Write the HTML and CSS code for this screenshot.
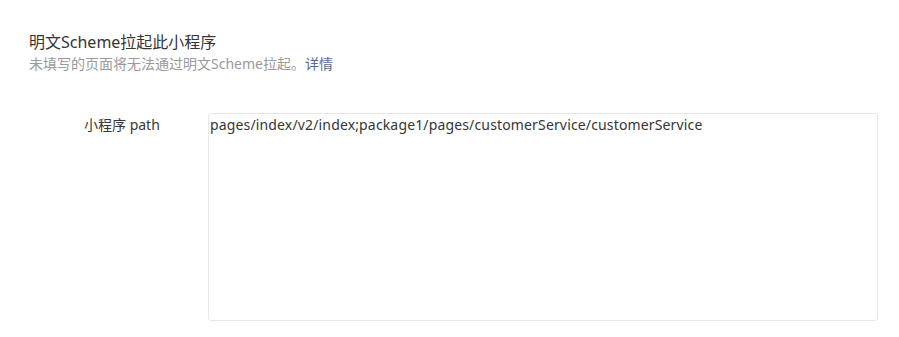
FILE: index.html
```html
<!DOCTYPE html>
<html lang="zh-CN">
<head>
    <meta charset="UTF-8">
    <title>明文Scheme拉起此小程序</title>
    <link rel="stylesheet" href="styles.css">
</head>
<body>
    <div class="section">
        <div class="section-head">
            <h3 class="section-title">明文Scheme拉起此小程序</h3>
            <p class="section-desc">未填写的页面将无法通过明文Scheme拉起。<a href="#" class="link">详情</a></p>
        </div>
        <div class="form-row">
            <label class="form-label" for="path">小程序 path</label>
            <div class="form-control">
                <textarea id="path" class="textarea">pages/index/v2/index;package1/pages/customerService/customerService</textarea>
            </div>
        </div>
    </div>
</body>
</html>
```

FILE: styles.css
```css
body {
    margin: 0;
    font-family: "Noto Sans", "Noto Sans CJK SC", sans-serif;
    color: #353535;
    background: #fff;
}

.section {
    padding: 30px 21px 0 29px;
}

.section-title {
    margin: 0;
    font-size: 16px;
    font-weight: normal;
    line-height: 24px;
    color: #353535;
}

.section-desc {
    margin: 0;
    font-size: 14px;
    line-height: 20px;
    color: #9a9a9a;
}

.link {
    color: #576b95;
    text-decoration: none;
}

.form-row {
    display: flex;
    margin-top: 39px;
    padding-left: 55px;
}

.form-label {
    width: 124px;
    flex-shrink: 0;
    padding-top: 2px;
    font-size: 14px;
    line-height: 20px;
    white-space: nowrap;
}

.form-control {
    flex: 1;
}

.textarea {
    display: block;
    width: 100%;
    height: 208px;
    box-sizing: border-box;
    border: 1px solid #e7e7e7;
    border-radius: 3px;
    padding: 1px 1px;
    font-family: inherit;
    font-size: 14px;
    line-height: 20px;
    letter-spacing: 0.15px;
    color: #353535;
    resize: none;
    outline: none;
}
```
